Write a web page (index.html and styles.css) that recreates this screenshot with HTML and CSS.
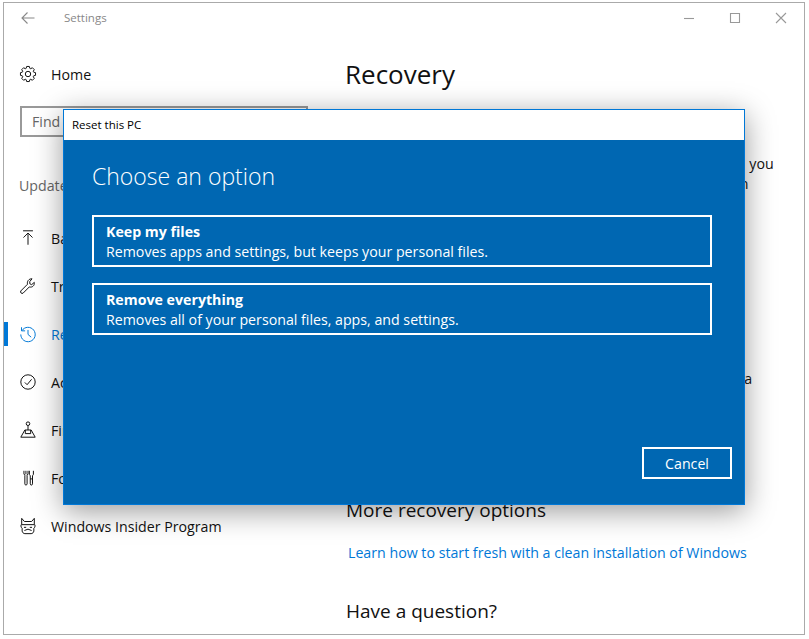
FILE: index.html
```html
<!DOCTYPE html>
<html>
    <head>
        <title>Settings - Recovery</title>
        <link rel="stylesheet" href="styles.css">
    </head>
    <body>
        <div class="window">
            <div class="titlebar">
                <svg class="back" width="16" height="14" viewBox="0 0 16 14"><path d="M14.5 7H2M7.5 1.5 2 7l5.5 5.5"/></svg>
                <span class="app-name">Settings</span>
                <div class="caption">
                    <svg width="12" height="12" viewBox="0 0 12 12"><path d="M1 6.5h10"/></svg>
                    <svg width="12" height="12" viewBox="0 0 12 12"><path d="M1.5 1.5h9v9h-9z"/></svg>
                    <svg width="12" height="12" viewBox="0 0 12 12"><path d="M1 1l10 10M11 1 1 11"/></svg>
                </div>
            </div>
            <div class="columns">
                <div class="sidebar">
                    <div class="nav-item">
                        <svg class="icon" viewBox="0 0 20 20"><path d="M7.96 3.72 8.52 1.63H11.48L12.04 3.72 13 4.12 14.88 3.04 16.96 5.12 15.88 7 16.28 7.96 18.37 8.52V11.48L16.28 12.04 15.88 13 16.96 14.88 14.88 16.96 13 15.88 12.04 16.28 11.48 18.37H8.52L7.96 16.28 7 15.88 5.12 16.96 3.04 14.88 4.12 13 3.72 12.04 1.63 11.48V8.52L3.72 7.96 4.12 7 3.04 5.12 5.12 3.04 7 4.12Z"/><circle cx="10" cy="10" r="3"/></svg>
                        <span>Home</span>
                    </div>
                    <div class="search">Find a setting</div>
                    <div class="group-title">Update &amp; security</div>
                    <div class="nav-item">
                        <svg class="icon" viewBox="0 0 20 20"><path d="M4.5 2h11M10 4.5V17.5M5 9.5l5-5 5 5"/></svg>
                        <span>Backup</span>
                    </div>
                    <div class="nav-item">
                        <svg class="icon" viewBox="0 0 20 20"><path d="M2 15.5 9.5 8C8.6 5 10.8 1.8 14.5 2L12 5v2.5L14 8.5l3-2.5C17.5 9.5 14.8 12 11.5 11L4.5 18C3 19 1 17.2 2 15.500Z"/></svg>
                        <span>Troubleshoot</span>
                    </div>
                    <div class="nav-item active">
                        <svg class="icon" viewBox="0 0 20 20"><path d="M3.3 6.2A8 8 0 1 1 2 10.5M2.8 2.5v4h4M10 5.5V10.5l3.5 3"/></svg>
                        <span>Recovery</span>
                    </div>
                    <div class="nav-item">
                        <svg class="icon" viewBox="0 0 20 20"><circle cx="10" cy="10" r="8"/><path d="M6.5 10.5 9 13l5-6"/></svg>
                        <span>Activation</span>
                    </div>
                    <div class="nav-item">
                        <svg class="icon" viewBox="0 0 20 20"><circle cx="10" cy="3" r="2"/><path d="M10 5V10M6.5 10h7L18 18H2ZM7 10v4h6v-4"/></svg>
                        <span>Find my device</span>
                    </div>
                    <div class="nav-item">
                        <svg class="icon" viewBox="0 0 20 20"><path d="M5.5 2v3.500L6.5 7v9.5c0 1.8 2.5 1.8 2.5 0V7l1-1.500V2M7.7 2v4M11.5 2v4l1 1.500v9c0 1.800 2.500 1.800 2.500 0v-9l1-1.500V2M12.500 11H15"/></svg>
                        <span>For developers</span>
                    </div>
                    <div class="nav-item">
                        <svg class="icon" viewBox="0 0 20 20"><path d="M3 1.5 6 5h8l3-3.5V8c1.2.5 1.2 3.5-.5 4.5v3c0 1.5-1.5 3-3 3h-7c-1.500 0-3-1.500-3-3v-3C1.800 11.500 1.800 8.500 3 8ZM3 8.500h14M5.500 11.500h2.500M12 11.500h2.500M6 15l4-1.500 4 1.500"/></svg>
                        <span>Windows Insider Program</span>
                    </div>
                </div>
                <div class="main">
                    <h1>Recovery</h1>
                    <h2>Reset this PC</h2>
                    <p class="reset-text"><span class="wide-line">If your PC isn't running well, resetting it might help. This lets you</span><br>choose to keep your personal files or remove them, and then</p>
                    <div class="win-button">Get started</div>
                    <h2 class="startup-title">Advanced startup</h2>
                    <p class="startup-text">Start up from a device or disc (such as a USB drive or DVD)<br>firmware settings, change Windows startup settings, or from a</p>
                    <div class="win-button">Restart now</div>
                    <h2 class="more-title">More recovery options</h2>
                    <a class="link">Learn how to start fresh with a clean installation of Windows</a>
                    <h2 class="question-title">Have a question?</h2>
                </div>
            </div>
        </div>

        <div class="dialog">
            <div class="dialog-title">Reset this PC</div>
            <div class="dialog-body">
                <div class="dialog-heading">Choose an option</div>
                <div class="option">
                    <b>Keep my files</b>
                    <span>Removes apps and settings, but keeps your personal files.</span>
                </div>
                <div class="option">
                    <b>Remove everything</b>
                    <span>Removes all of your personal files, apps, and settings.</span>
                </div>
                <div class="dialog-actions">
                    <div class="cancel">Cancel</div>
                </div>
            </div>
        </div>
    </body>
</html>
```

FILE: styles.css
```css
body {
    margin: 2px 0 0 3px;
    background: #fff;
    font-family: "Open Sans", "Noto Sans", sans-serif;
    font-size: 14.2px;
    color: #111;
    overflow: hidden;
}

svg {
    fill: none;
    stroke: currentColor;
    stroke-width: 1.1;
}

/* Settings window */
.window {
    width: 800px;
    height: 631px;
    border: 1px solid #aaa;
    background: #fff;
    overflow: hidden;
}

.titlebar {
    display: flex;
    align-items: center;
    height: 29px;
    padding-left: 16px;
    color: #888;
}

.app-name {
    margin-left: 28px;
    font-size: 11.5px;
}

.caption {
    display: flex;
    gap: 34px;
    margin-left: auto;
    margin-right: 17px;
    color: #999;
}

.columns {
    display: flex;
}

/* Left navigation */
.sidebar {
    width: 341px;
    flex-shrink: 0;
    padding-top: 18px;
}

.nav-item {
    display: flex;
    align-items: center;
    height: 48px;
    padding-left: 15px;
}

.icon {
    width: 18px;
    height: 18px;
    margin-right: 14px;
    flex-shrink: 0;
}

.nav-item.active {
    color: #0078d7;
    border-left: 4px solid #0078d7;
    padding-left: 11px;
    height: 24px;
    margin: 12px 0;
}

.search {
    width: 274px;
    height: 27px;
    margin: 8px 0 0 16px;
    padding-left: 10px;
    border: 2px solid #999;
    line-height: 27px;
    color: #666;
}

.group-title {
    height: 20px;
    margin: 39px 0 18px 15px;
    line-height: 20px;
    color: #666;
}

/* Page content */
.main {
    display: flex;
    flex-direction: column;
    align-items: flex-start;
    white-space: nowrap;
}

h1 {
    margin: 24px 0 0;
    font-size: 26px;
    font-weight: 400;
    line-height: 36px;
}

h2 {
    margin: 20px 0 0;
    font-size: 19px;
    font-weight: 400;
    line-height: 28px;
}

p {
    margin: 0;
    line-height: 20px;
}

.reset-text {
    margin-top: 14px;
}

.wide-line {
    word-spacing: 0.55px;
}

.win-button {
    margin-top: 10px;
    padding: 6px 24px;
    background: #ccc;
}

.startup-title {
    margin-top: 66px;
}

.startup-text {
    margin-top: 20px;
    word-spacing: -0.4px;
}

.more-title {
    margin-top: 66px;
    margin-left: 1px;
}

.link {
    margin: 19px 0 0 3px;
    color: #0078d7;
}

.question-title {
    margin-top: 35px;
    margin-left: 1px;
}

/* Reset dialog, sits over the window */
.dialog {
    position: absolute;
    left: 63px;
    top: 109px;
    width: 680px;
    height: 394px;
    display: flex;
    flex-direction: column;
    border: 1px solid #0078d7;
    box-shadow: 0 6px 28px rgba(0, 0, 0, 0.4);
}

.dialog-title {
    height: 30px;
    padding-left: 8px;
    background: #fff;
    font-size: 11.5px;
    line-height: 30px;
    color: #000;
}

.dialog-body {
    flex: 1;
    display: flex;
    flex-direction: column;
    padding: 0 12px 25px 28px;
    background: #0067b2;
    color: #fff;
}

.dialog-heading {
    margin-top: 20px;
    margin-bottom: 22px;
    font-size: 23px;
    font-weight: 300;
    line-height: 33px;
}

.option {
    display: flex;
    flex-direction: column;
    width: 592px;
    height: 43px;
    padding: 5px 12px 0;
    margin-bottom: 16px;
    border: 2px solid #fff;
    line-height: 20px;
}

.dialog-actions {
    display: flex;
    justify-content: flex-end;
    margin-top: auto;
}

.cancel {
    width: 86px;
    height: 28px;
    border: 2px solid #fff;
    text-align: center;
    line-height: 29px;
}
```
